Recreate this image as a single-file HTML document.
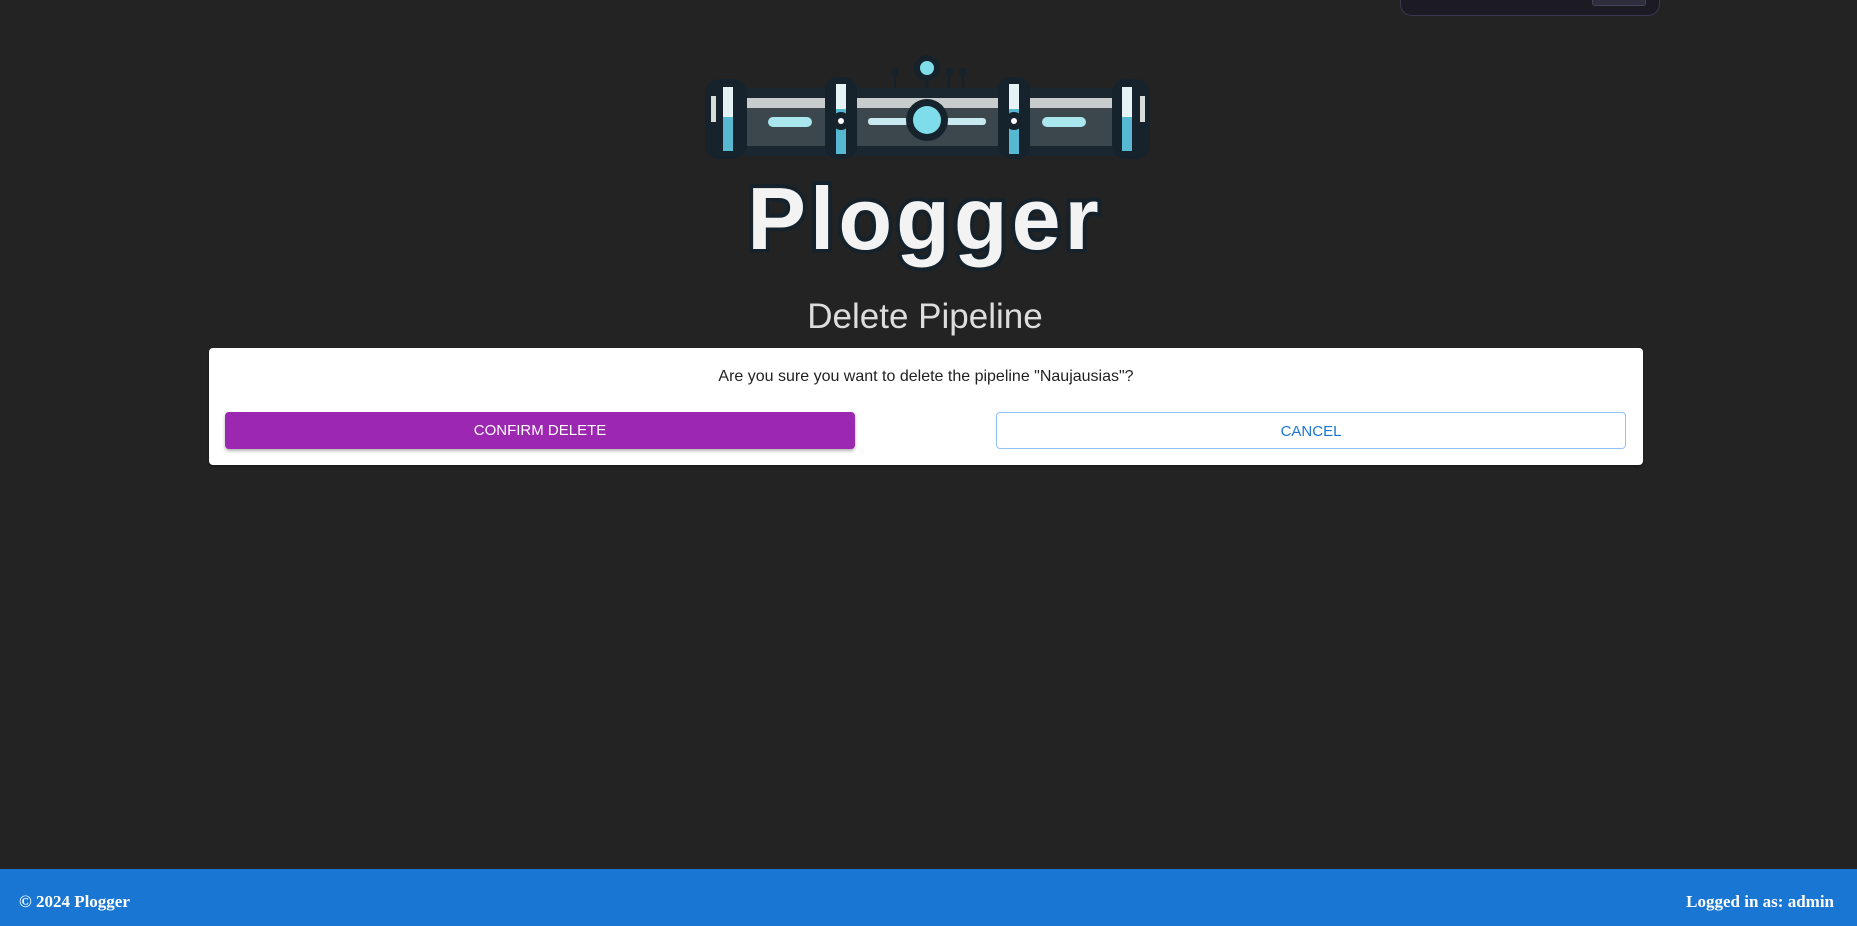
<!DOCTYPE html>
<html><head><meta charset="utf-8"><style>
html,body{margin:0;padding:0;width:1857px;height:926px;background:#232323;overflow:hidden;position:relative;font-family:"Liberation Sans",Arial,sans-serif}
.topbox{position:absolute;left:1400px;top:-20px;width:258px;height:34px;background:#1c1b24;border:1px solid #3a3650;border-radius:0 0 12px 12px}
.topbtn{position:absolute;left:1592px;top:-10px;width:52px;height:14px;background:#2e2d3c;border:1px solid #45435a;border-radius:3px}
h1{position:absolute;left:0;width:1850px;top:295px;margin:0;text-align:center;font-weight:normal;font-size:35px;color:#dddddd;line-height:44px}
.card{position:absolute;left:209px;top:348px;width:1434px;height:117px;background:#fff;border-radius:4px;box-shadow:0 2px 2px rgba(0,0,0,.3)}
.msg{position:absolute;left:0;right:0;top:20px;text-align:center;font-size:16px;color:#222}
.b{position:absolute;top:64px;height:37px;width:630px;border-radius:4px;font-size:15px;line-height:37px;text-align:center;box-sizing:border-box}
.b1{left:16px;background:#9c27b0;color:#fff;box-shadow:0 2px 3px rgba(0,0,0,.3)}
.b2{left:787px;border:1px solid #90c2f5;color:#1976d2}
.footer{position:absolute;left:0;top:869px;width:1857px;height:57px;background:#1976d2;color:#fff;font-family:"Liberation Serif",serif;font-size:17px;font-weight:bold}
.footer .l{position:absolute;left:19px;top:23px}
.footer .r{position:absolute;right:23px;top:23px}
</style></head><body>
<div class="topbox"></div><div class="topbtn"></div>
<svg style="position:absolute;left:0;top:0" width="1857" height="300">
 <g>
  <line x1="895" y1="73" x2="895" y2="88" stroke="#15222b" stroke-width="2"/>
  <line x1="949" y1="73" x2="949" y2="88" stroke="#15222b" stroke-width="2"/>
  <line x1="963" y1="73" x2="963" y2="88" stroke="#15222b" stroke-width="2"/>
  <line x1="927" y1="70" x2="927" y2="90" stroke="#15222b" stroke-width="3"/>
  <circle cx="895" cy="72" r="4" fill="#15222b"/><circle cx="949" cy="72" r="4" fill="#15222b"/><circle cx="963" cy="72" r="4" fill="#15222b"/>
  <circle cx="927" cy="68" r="13" fill="#15222b"/><circle cx="927" cy="68" r="7" fill="#7fdcea"/>
  <rect x="740" y="88" width="380" height="68" rx="6" fill="#1a2630"/>
  <rect x="745" y="98" width="370" height="10" fill="#c9cccd"/>
  <rect x="745" y="108" width="370" height="38" fill="#3c464d"/>
  <rect x="768" y="117" width="44" height="10" rx="5" fill="#a9e6ee"/>
  <rect x="868" y="118" width="40" height="7" rx="3" fill="#c7e8ee"/>
  <rect x="946" y="118" width="40" height="7" rx="3" fill="#c7e8ee"/>
  <rect x="1042" y="117" width="44" height="10" rx="5" fill="#a9e6ee"/>
  <rect x="705" y="79" width="42" height="80" rx="14" fill="#16232c"/>
  <rect x="723" y="87" width="10" height="64" fill="#57b8d2"/><rect x="723" y="87" width="10" height="30" fill="#e6f3f5"/>
  <rect x="711" y="96" width="5" height="26" fill="#d8dcd8"/>
  <rect x="1112" y="79" width="38" height="80" rx="14" fill="#16232c"/>
  <rect x="1122" y="87" width="10" height="64" fill="#57b8d2"/><rect x="1122" y="87" width="10" height="30" fill="#e6f3f5"/>
  <rect x="1140" y="96" width="5" height="26" fill="#d8dcd8"/>
  <rect x="825" y="77" width="32" height="82" rx="12" fill="#16232c"/>
  <rect x="836" y="84" width="10" height="70" fill="#57b8d2"/><rect x="836" y="84" width="10" height="25" fill="#e6f3f5"/>
  <circle cx="841" cy="121" r="9" fill="#16232c"/><circle cx="841" cy="121" r="3" fill="#fff"/>
  <rect x="998" y="77" width="32" height="82" rx="12" fill="#16232c"/>
  <rect x="1009" y="84" width="10" height="70" fill="#57b8d2"/><rect x="1009" y="84" width="10" height="25" fill="#e6f3f5"/>
  <circle cx="1014" cy="121" r="9" fill="#16232c"/><circle cx="1014" cy="121" r="3" fill="#fff"/>
  <circle cx="927" cy="120" r="21" fill="#16232c"/><circle cx="927" cy="120" r="14" fill="#7fdcea"/>
 </g>
 <text x="925" y="249" text-anchor="middle" font-family="Liberation Sans, sans-serif" font-weight="bold" font-size="88" fill="#f2f3f2" stroke="#15222b" stroke-width="8" paint-order="stroke" letter-spacing="4">Plogger</text>
</svg>
<h1>Delete Pipeline</h1>
<div class="card">
 <div class="msg">Are you sure you want to delete the pipeline "Naujausias"?</div>
 <div class="b b1">CONFIRM DELETE</div>
 <div class="b b2">CANCEL</div>
</div>
<div class="footer"><span class="l">© 2024 Plogger</span><span class="r">Logged in as: admin</span></div>
</body></html>
